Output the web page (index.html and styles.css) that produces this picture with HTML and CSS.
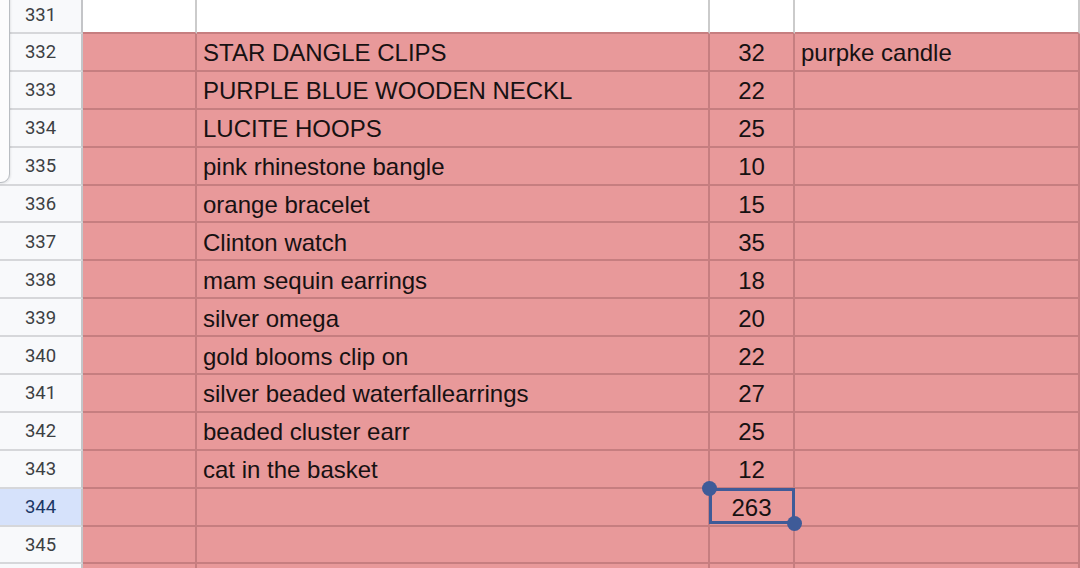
FILE: index.html
```html
<!DOCTYPE html>
<html>
<head>
<meta charset="utf-8">
<link rel="stylesheet" href="styles.css">
</head>
<body>
<div class="sheet">
  <div class="row blank"><div class="rh">331</div><div class="c"></div><div class="c"></div><div class="c"></div><div class="c"></div></div>
  <div class="row"><div class="rh">332</div><div class="c"></div><div class="c t">STAR DANGLE CLIPS</div><div class="c n">32</div><div class="c t">purpke candle</div></div>
  <div class="row"><div class="rh">333</div><div class="c"></div><div class="c t">PURPLE BLUE WOODEN NECKL</div><div class="c n">22</div><div class="c"></div></div>
  <div class="row"><div class="rh">334</div><div class="c"></div><div class="c t">LUCITE HOOPS</div><div class="c n">25</div><div class="c"></div></div>
  <div class="row"><div class="rh">335</div><div class="c"></div><div class="c t">pink rhinestone bangle</div><div class="c n">10</div><div class="c"></div></div>
  <div class="row"><div class="rh">336</div><div class="c"></div><div class="c t">orange bracelet</div><div class="c n">15</div><div class="c"></div></div>
  <div class="row"><div class="rh">337</div><div class="c"></div><div class="c t">Clinton watch</div><div class="c n">35</div><div class="c"></div></div>
  <div class="row"><div class="rh">338</div><div class="c"></div><div class="c t">mam sequin earrings</div><div class="c n">18</div><div class="c"></div></div>
  <div class="row"><div class="rh">339</div><div class="c"></div><div class="c t">silver omega</div><div class="c n">20</div><div class="c"></div></div>
  <div class="row"><div class="rh">340</div><div class="c"></div><div class="c t">gold blooms clip on</div><div class="c n">22</div><div class="c"></div></div>
  <div class="row"><div class="rh">341</div><div class="c"></div><div class="c t">silver beaded waterfallearrings</div><div class="c n">27</div><div class="c"></div></div>
  <div class="row"><div class="rh">342</div><div class="c"></div><div class="c t">beaded cluster earr</div><div class="c n">25</div><div class="c"></div></div>
  <div class="row"><div class="rh">343</div><div class="c"></div><div class="c t">cat in the basket</div><div class="c n">12</div><div class="c"></div></div>
  <div class="row"><div class="rh active">344</div><div class="c"></div><div class="c"></div><div class="c n sel">263<span class="selbox"></span><span class="knob k1"></span><span class="knob k2"></span></div><div class="c"></div></div>
  <div class="row"><div class="rh">345</div><div class="c"></div><div class="c"></div><div class="c"></div><div class="c"></div></div>
  <div class="row"><div class="rh"></div><div class="c"></div><div class="c"></div><div class="c"></div><div class="c"></div></div>
</div>
<div class="panel"></div>
</body>
</html>
```
FILE: styles.css
```css
html, body {
  margin: 0;
  padding: 0;
  width: 1080px;
  height: 568px;
  overflow: hidden;
  background: #ffffff;
}
.sheet {
  margin-top: -3.9px;
}
.row {
  display: grid;
  grid-template-columns: 83px 114px 513px 85px 1fr;
  height: 37.9px;
}
.rh {
  box-sizing: border-box;
  background: #f8f9fb;
  border-right: 2px solid #c4c5c8;
  border-bottom: 2px solid #d6d7da;
  display: flex;
  align-items: center;
  justify-content: center;
  font-family: Roboto, "Liberation Sans", sans-serif;
  font-size: 18.5px;
  color: #3c4043;
  padding-top: 1px;
}
.rh.active {
  background: #d6e2fb;
  color: #1c3766;
}
.c {
  box-sizing: border-box;
  background: #e8999a;
  border-right: 2px solid #c67e80;
  border-bottom: 2px solid #c67e80;
  display: flex;
  align-items: center;
  font-family: "Liberation Sans", Arial, sans-serif;
  font-size: 24px;
  color: #171112;
  white-space: nowrap;
  padding-top: 3px;
}
.blank .c {
  background: #ffffff;
  border-right-color: #cbcbcb;
  border-bottom-color: #c67e80;
}
.t {
  padding-left: 6px;
}
.n {
  justify-content: center;
}
.sel {
  position: relative;
}
.selbox {
  position: absolute;
  left: -1px;
  top: -1px;
  width: 86px;
  height: 36px;
  box-sizing: border-box;
  border: 3px solid #3f5b98;
}
.knob {
  position: absolute;
  width: 15px;
  height: 15px;
  border-radius: 50%;
  background: #3f5b98;
}
.k1 {
  left: -8px;
  top: -8px;
}
.k2 {
  left: 77px;
  top: 27px;
}
.panel {
  position: absolute;
  left: -12px;
  top: -12px;
  width: 22px;
  height: 195px;
  box-sizing: border-box;
  border: 1.5px solid #b9bdc2;
  border-radius: 9px;
  background: #fcfcfd;
  box-shadow: 1px 1px 2px rgba(0,0,0,0.08);
}
```
